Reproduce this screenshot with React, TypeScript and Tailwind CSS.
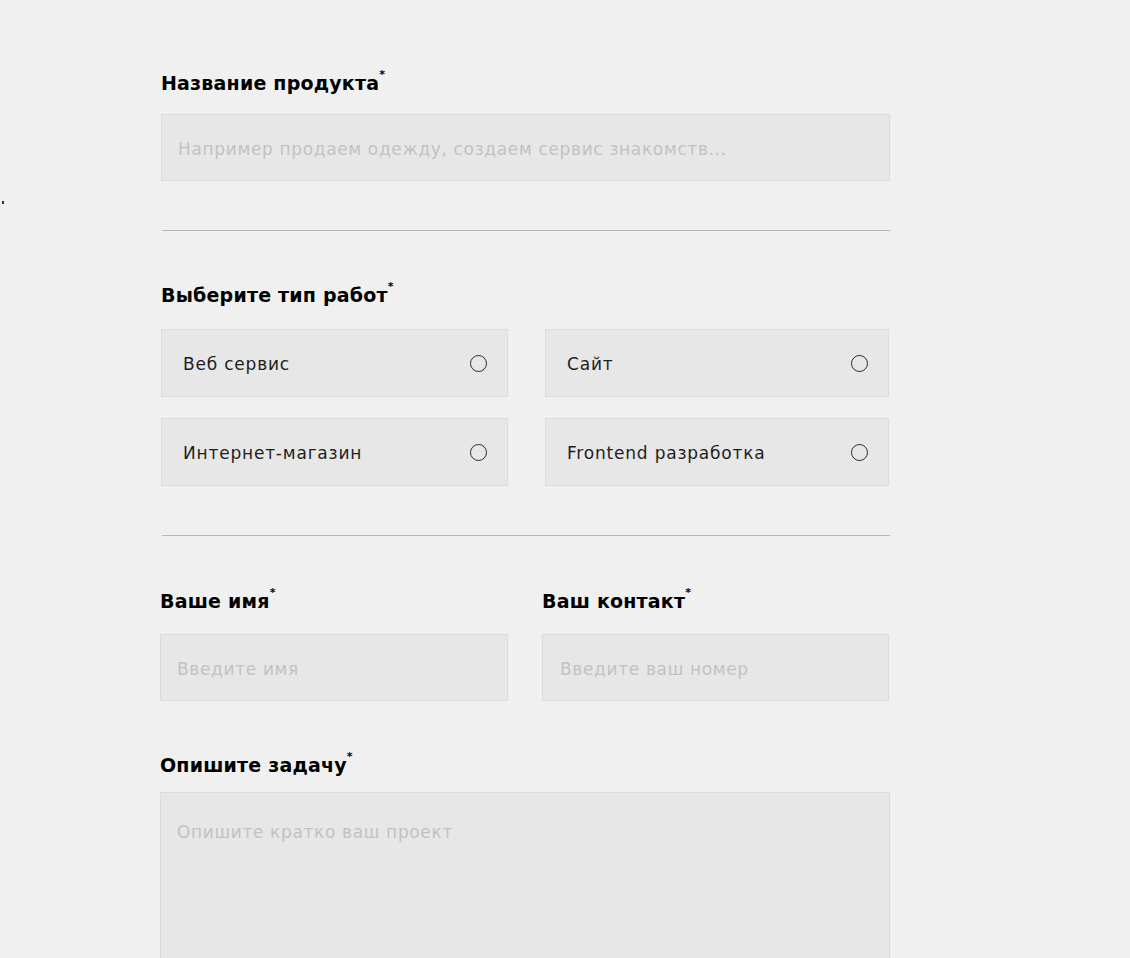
import { ReactNode } from "react"

const heading = "font-['DejaVu_Sans',sans-serif] font-bold text-[19px] leading-6 text-black tracking-[0.2px]"
const field =
  "w-full bg-[#e7e7e7] border border-[#dcdcdc] outline-none text-[17px] tracking-[0.65px] text-[#222] placeholder:text-[#c2c2c2] font-['DejaVu_Sans',sans-serif]"

function Label({ children }: { children: ReactNode }) {
  return (
    <h2 className={heading}>
      {children}
      <sup className="text-[11px] align-[7px]">*</sup>
    </h2>
  )
}

function Option({ title }: { title: string }) {
  return (
    <label className="flex h-[68px] items-center justify-between bg-[#e7e7e7] border border-[#dcdcdc] pl-[21px] pr-[20px] cursor-pointer">
      <span className="mt-[4px] font-['DejaVu_Sans',sans-serif] text-[17px] tracking-[0.8px] text-[#1e1e1e]">{title}</span>
      <span className="mt-px w-[17px] h-[17px] rounded-full border-[1.5px] border-[#2a2a2a]" />
    </label>
  )
}

export default function App() {
  const types = ["Веб сервис", "Сайт", "Интернет-магазин", "Frontend разработка"]

  return (
    <div className="relative min-h-[958px] bg-[#f0f0f0] overflow-hidden">
      <span className="absolute left-[2px] top-[201px] w-[2px] h-[3px] bg-[#333]" />
      <form className="ml-[161px] w-[729px] pt-[71px]">
        <Label>Название продукта</Label>
        <input
          className={`${field} mt-[19px] h-[67px] pl-[16px] pr-[16px] pt-[2px]`}
          placeholder="Например продаем одежду, создаем сервис знакомств..."
        />

        <div className="mt-[49px] h-px bg-[#b8b8b8] ml-px w-[728px]" />

        <div className="mt-[52px]">
          <Label>Выберите тип работ</Label>
        </div>
        <div className="mt-[22px] grid grid-cols-[347px_344px] gap-x-[37px] gap-y-[21px]">
          {types.map((t, i) => (
            <Option key={i} title={t} />
          ))}
        </div>

        <div className="mt-[49px] h-px bg-[#b8b8b8] ml-px w-[728px]" />

        <div className="mt-[53px] grid grid-cols-[348px_347px] gap-x-[34px] -ml-px">
          <div>
            <Label>Ваше имя</Label>
            <input className={`${field} mt-[21px] h-[67px] px-[16px] pt-[2px]`} placeholder="Введите имя" />
          </div>
          <div>
            <Label>Ваш контакт</Label>
            <input className={`${field} mt-[21px] h-[67px] px-[17px] pt-[2px]`} placeholder="Введите ваш номер" />
          </div>
        </div>

        <div className="mt-[52px] -ml-px">
          <Label>Опишите задачу</Label>
          <textarea
            className={`${field} mt-[15px] h-[200px] px-[16px] pt-[27px] pb-[20px] resize-none block w-[730px]`}
            placeholder="Опишите кратко ваш проект"
          />
        </div>
      </form>
    </div>
  )
}
